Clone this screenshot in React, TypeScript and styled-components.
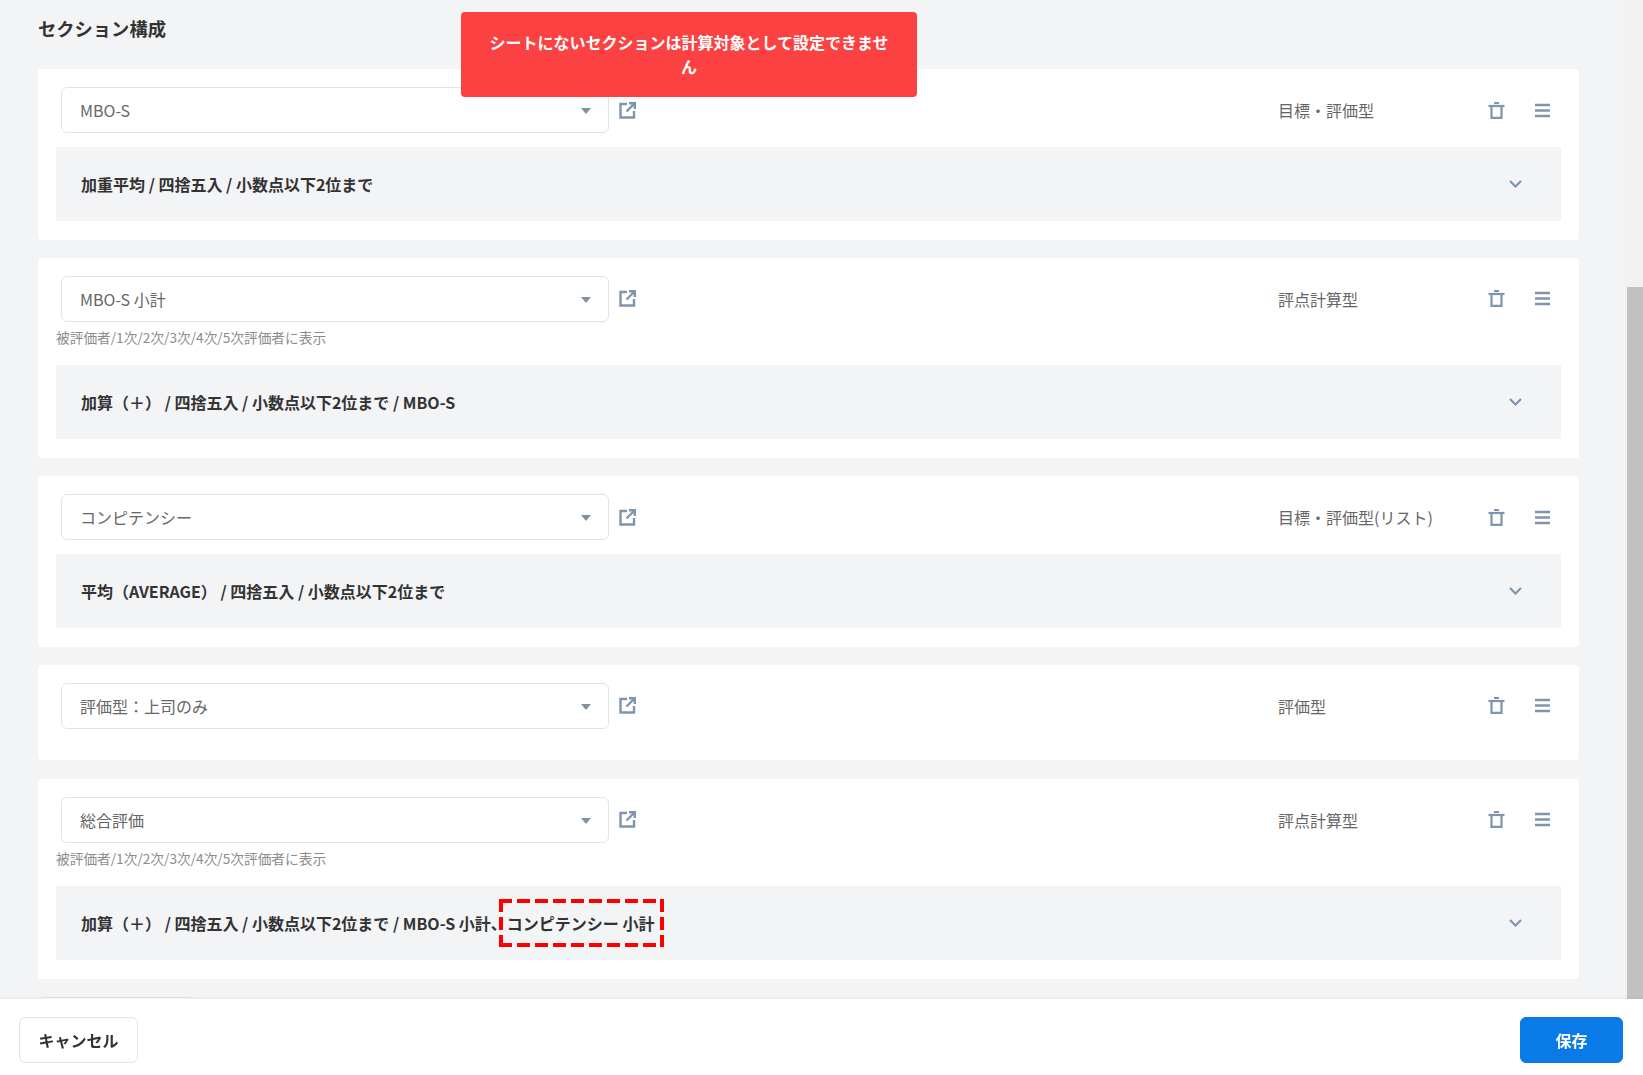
import React from 'react';
import styled, { createGlobalStyle } from 'styled-components';

const GlobalStyle = createGlobalStyle`
  html, body {
    margin: 0;
    padding: 0;
    height: 100%;
    overflow: hidden;
    background: #f3f4f6;
    font-family: "Noto Sans CJK JP", "Noto Sans", sans-serif;
    color: #333;
  }
  * { box-sizing: border-box; }
`;

const Page = styled.div`
  display: flex;
  height: 100vh;
  overflow: hidden;
`;

const Main = styled.main`
  flex: 1;
  min-width: 0;
  padding: 0 46px 0 38px;
  overflow: hidden;
`;

const Title = styled.h2`
  margin: 0 0 13px;
  height: 56px;
  font-size: 18.3px;
  line-height: 56px;
  font-weight: 700;
  color: #333;
`;

const Card = styled.section`
  margin-bottom: 18.25px;
  padding: 18px 18px 18.5px;
  border-radius: 4px;
  background: #fff;
`;

const Header = styled.div`
  display: flex;
  align-items: center;
  padding-left: 5px;
  padding-right: 11px;
`;

const Select = styled.div`
  display: flex;
  align-items: center;
  justify-content: space-between;
  width: 548px;
  height: 46px;
  padding: 0 17.5px 0 18px;
  border: 1px solid #dfe4e9;
  border-radius: 6px;
  background: #fff;
  font-size: 16px;
  color: #666;
`;

const Caret = styled.span`
  width: 0;
  height: 0;
  margin-top: 2px;
  border-left: 5px solid transparent;
  border-right: 5px solid transparent;
  border-top: 6px solid #7d90a6;
`;

const LinkIcon = styled.svg`
  flex: none;
  width: 17px;
  height: 17px;
  margin-left: 9.5px;
  color: #7f95ad;
`;

const TypeLabel = styled.div`
  flex: none;
  width: 210px;
  margin-left: auto;
  font-size: 16px;
  color: #666;
`;

const TrashIcon = styled.svg`
  flex: none;
  width: 17px;
  height: 17px;
  color: #7f95ad;
`;

const MenuIcon = styled.svg`
  flex: none;
  width: 15px;
  height: 15px;
  margin-left: 30px;
  color: #7f95ad;
`;

const Caption = styled.div`
  height: 29.5px;
  padding-top: 4px;
  font-size: 13.7px;
  line-height: 22px;
  color: #8c8c8c;
`;

const Spacer = styled.div<{ $tight?: boolean }>`
  height: ${p => (p.$tight ? '13px' : '14px')};
`;

const Summary = styled.div`
  display: flex;
  align-items: center;
  justify-content: space-between;
  height: 74px;
  padding: 0 39.5px 0 25px;
  background: #f3f4f6;
  font-size: 16px;
  font-weight: 700;
  color: #333;
`;

// red annotation frame: long dashes, so drawn with gradients rather than border-style
const Marked = styled.span`
  display: inline-block;
  margin-left: -8px;
  padding: 12px 10px 12px 8px;
  font-weight: 700;
  background:
    repeating-linear-gradient(90deg, #f00 0 13px, transparent 13px 18px) top / 100% 4px no-repeat,
    repeating-linear-gradient(90deg, #f00 0 13px, transparent 13px 18px) bottom / 100% 4px no-repeat,
    repeating-linear-gradient(180deg, #f00 0 13px, transparent 13px 18px) left / 4px 100% no-repeat,
    repeating-linear-gradient(180deg, #f00 0 13px, transparent 13px 18px) right / 4px 100% no-repeat;
`;

const Chevron = styled.svg`
  flex: none;
  width: 13px;
  height: 8px;
  color: #7f95ad;
`;

const HiddenButton = styled.div`
  width: 157px;
  height: 46px;
  border: 1px solid #dfe4e9;
  border-radius: 6px;
  background: #fff;
`;

const Scrollbar = styled.div`
  flex: none;
  width: 18px;
  padding-top: 287px;
  background: #f1f1f1;
`;

const ScrollThumb = styled.div`
  width: 16px;
  height: 100%;
  margin-left: 2px;
  background: #c1c1c1;
`;

const Toast = styled.div`
  position: fixed;
  top: 12px;
  left: 461px;
  width: 456px;
  height: 85px;
  padding: 18px 24px;
  border-radius: 4px;
  background: #fb4141;
  font-size: 16px;
  line-height: 24px;
  font-weight: 700;
  text-align: center;
  color: #fff;
`;

const Footer = styled.footer`
  position: fixed;
  left: 0;
  right: 0;
  bottom: 0;
  display: flex;
  justify-content: space-between;
  align-items: flex-start;
  height: 76px;
  padding: 18px 20px 0 19px;
  background: #fff;
  box-shadow: 0 -1px 3px rgba(0, 0, 0, 0.06);
`;

const Button = styled.button<{ $primary?: boolean }>`
  height: 46px;
  width: ${p => (p.$primary ? '103px' : '119px')};
  border: 1px solid ${p => (p.$primary ? '#0a7ae8' : '#dfe4e9')};
  border-radius: 6px;
  background: ${p => (p.$primary ? '#0a7ae8' : '#fff')};
  color: ${p => (p.$primary ? '#fff' : '#333')};
  font-family: inherit;
  font-size: 16px;
  font-weight: 700;
`;

type Section = {
  name: string;
  type: string;
  caption?: boolean;
  summary?: React.ReactNode;
};

const sections: Section[] = [
  { name: 'MBO-S', type: '目標・評価型', summary: '加重平均 / 四捨五入 / 小数点以下2位まで' },
  { name: 'MBO-S 小計', type: '評点計算型', caption: true, summary: '加算（＋） / 四捨五入 / 小数点以下2位まで / MBO-S' },
  { name: 'コンピテンシー', type: '目標・評価型(リスト)', summary: '平均（AVERAGE） / 四捨五入 / 小数点以下2位まで' },
  { name: '評価型：上司のみ', type: '評価型' },
  {
    name: '総合評価',
    type: '評点計算型',
    caption: true,
    summary: (
      <span>
        加算（＋） / 四捨五入 / 小数点以下2位まで / MBO-S 小計、<Marked>コンピテンシー 小計</Marked>
      </span>
    ),
  },
];

const App = () => {
  return (
    <>
      <GlobalStyle />
      <Page>
        <Main>
          <Title>セクション構成</Title>
          {sections.map(section => (
            <Card key={section.name}>
              <Header>
                <Select>
                  {section.name}
                  <Caret />
                </Select>
                <LinkIcon viewBox="0 0 17 17" fill="none" stroke="currentColor" strokeWidth="2.4">
                  <path d="M8 2H1.5V15.5H15V9" />
                  <path d="M7.5 9.5L15 2M10 1.2H15.8V7" />
                </LinkIcon>
                <TypeLabel>{section.type}</TypeLabel>
                <TrashIcon viewBox="0 0 17 17" fill="none" stroke="currentColor" strokeWidth="2.2">
                  <path d="M0.5 4H16.5" />
                  <path d="M6 1H11" />
                  <path d="M3.5 4V15.8H13.5V4" />
                </TrashIcon>
                <MenuIcon viewBox="0 0 15 15" fill="none" stroke="currentColor" strokeWidth="2.3">
                  <path d="M0 2H15M0 7.5H15M0 13H15" />
                </MenuIcon>
              </Header>
              {section.caption ? <Caption>被評価者/1次/2次/3次/4次/5次評価者に表示</Caption> : null}
              <Spacer $tight={!section.summary} />
              {section.summary ? (
                <Summary>
                  {section.summary}
                  <Chevron viewBox="0 0 13 8" fill="none" stroke="currentColor" strokeWidth="2.2">
                    <path d="M1 1L6.5 6.5L12 1" />
                  </Chevron>
                </Summary>
              ) : null}
            </Card>
          ))}
          <HiddenButton />
        </Main>
        <Scrollbar>
          <ScrollThumb />
        </Scrollbar>
      </Page>
      <Toast>シートにないセクションは計算対象として設定できません</Toast>
      <Footer>
        <Button>キャンセル</Button>
        <Button $primary>保存</Button>
      </Footer>
    </>
  );
};

export default App;
